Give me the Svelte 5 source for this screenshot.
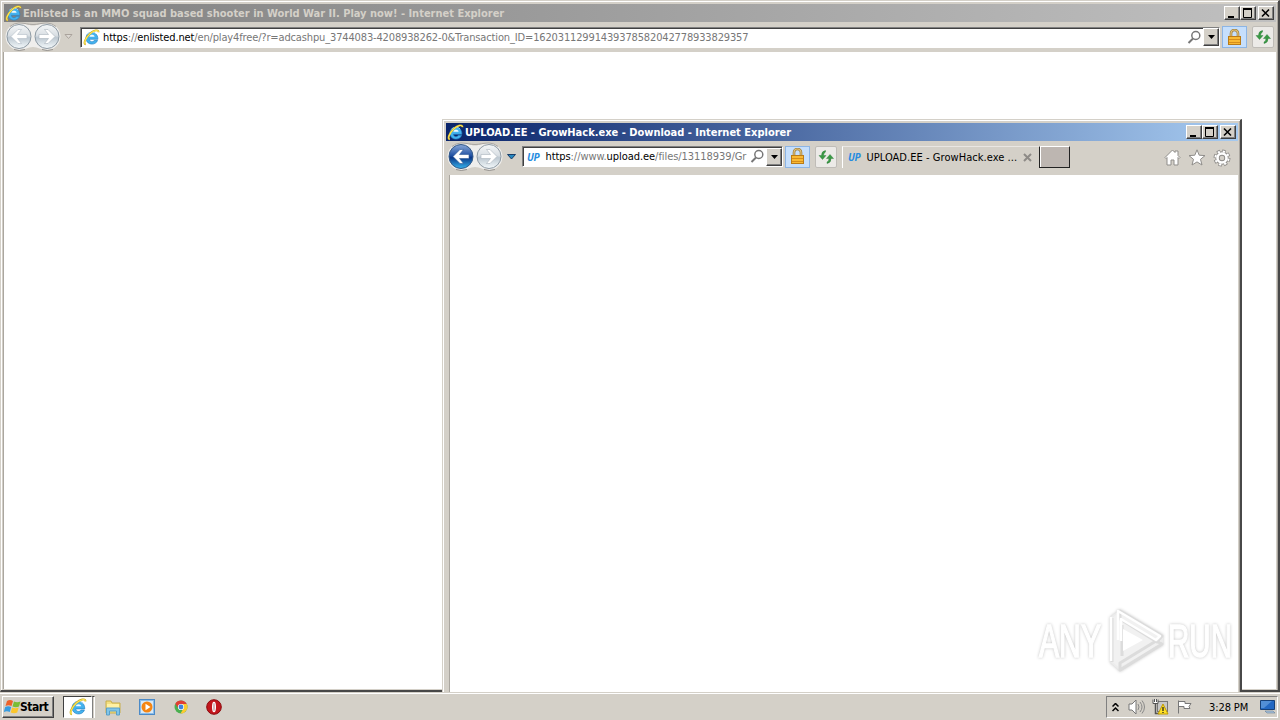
<script>
  const mainUrl = '/en/play4free/?r=adcashpu_3744083-4208938262-0&Transaction_ID=16203112991439378582042778933829357';
</script>

{#snippet ieIcon(size)}
  <svg class="ie" width={size} height={size} viewBox="0 0 16 16">
    <path d="M14 9.700H6c.2 2.600 3.600 2.900 4.700 1h3c-1.500 5.200-10.900 4.700-10.900-2C2.800 1 14.300 1 14 9.700z" fill="#43b2ee" stroke="#2583c5" stroke-width=".6" />
    <path d="M6 7.300h4.900c-.3-2.400-4.500-2.400-4.900 0z" fill="#f1faff" />
    <path d="M4.200 4.800Q6 3 8.400 3q2.600 0 4 1.700" fill="none" stroke="#a8def8" stroke-width=".8" />
    <path d="M2.700 14.500C-.2 14.400 2 8.600 6.300 4.500 9.700 1.300 14.600-.2 14.700 3" fill="none" stroke="#c7a728" stroke-width="1.700" />
    <path d="M2.600 14.200C.2 14 2.300 8.600 6.500 4.600 10 1.400 14.300.2 14.500 2.900" fill="none" stroke="#ffe651" stroke-width="1.100" />
  </svg>
{/snippet}

{#snippet navButtons(active)}
  <svg class="nav" width="57" height="32" viewBox="0 0 57 32">
    <defs>
      <linearGradient id="blueOrb" x2="0" y2="1">
        <stop offset="0" stop-color="#8ba9d8" />
        <stop offset=".45" stop-color="#2454a5" />
        <stop offset=".55" stop-color="#0b3888" />
        <stop offset="1" stop-color="#36b4ef" />
      </linearGradient>
      <linearGradient id="grayOrb" x2="0" y2="1">
        <stop offset="0" stop-color="#f5f7f8" />
        <stop offset=".45" stop-color="#d9dfe4" />
        <stop offset=".55" stop-color="#bdc8d1" />
        <stop offset="1" stop-color="#f5fafc" />
      </linearGradient>
    </defs>
    <path d="M14 2C20 2 23 4.500 28 4.500S36 2 42 2a13.500 13.500 0 010 27C36 29 33 26 28 26s-8 3-14 3a13.500 13.500 0 010-27z" fill="#efeeec" />
    <path d="M5 5.500Q9 2 14 2C20 2 23 3.500 28 3.500S36 2 42 2q5 0 9 3.500" fill="none" stroke="#a9a6a2" />
    <path d="M9 28.500q5 2 11 0M37 28.500q5 2 11 0" fill="none" stroke="#96938f" />
    <circle cx="14" cy="15.500" r="12" fill={active ? 'url(#blueOrb)' : 'url(#grayOrb)'} stroke={active ? '#345987' : '#8d99a3'} />
    <circle cx="42" cy="15.500" r="12" fill="url(#grayOrb)" stroke="#8d99a3" />
    <path d="M6 15.500L13 8.500h3.500L12.500 13.500h9.500v4H12.500l4 5H13z" fill="#fff" stroke={active ? '#315a97' : '#b3bec8'} stroke-width=".6" />
    <path d="M50 15.500L43 8.500h-3.500l4 5H34v4h9.500l-4 5H43z" fill="#fff" stroke="#a9b3bc" stroke-width=".6" />
  </svg>
{/snippet}

{#snippet windowButtons()}
  <div class="win-buttons">
    <span class="wb"><svg width="14" height="12"><path d="M3 9h6v2H3z" /></svg></span>
    <span class="wb"><svg width="14" height="12"><path d="M2.500 2.500h8v8h-8z" fill="none" stroke="#000" /><path d="M2 1h9v2H2z" /></svg></span>
    <span class="wb close"><svg width="14" height="12"><path d="M3 2.500l7 7M10 2.500l-7 7" stroke="#000" stroke-width="1.600" /></svg></span>
  </div>
{/snippet}

{#snippet addressEnd()}
  <svg class="search" width="15" height="15"><circle cx="8.800" cy="5.500" r="4" fill="none" stroke="#777" stroke-width="1.500" /><path d="M6 8.500L1.500 13" stroke="#777" stroke-width="2" /></svg>
  <span class="drop"><svg width="7" height="4"><path d="M0 0h7L3.500 4z" /></svg></span>
{/snippet}

{#snippet pageButtons()}
  <span class="lock">
    <svg width="15" height="17" viewBox="0 0 15 17">
      <path d="M4 8V4.500a3.500 3.500 0 017 0V8" fill="none" stroke="#9c7b3c" stroke-width="2.600" />
      <path d="M4 8V4.500a3.500 3.500 0 017 0V8" fill="none" stroke="#e3c377" stroke-width="1.200" />
      <rect x="1.500" y="7.500" width="12" height="8" fill="#f9b933" stroke="#b97b18" />
      <path d="M2 10.500h11M2 13.500h11" stroke="#d68d1b" />
    </svg>
  </span>
  <span class="refresh">
    <svg width="16" height="16" viewBox="0 0 16 16">
      <path d="M7.500 1.500Q3.500 2 3.500 6.500H1L4.500 10.500 8 6.500H5.500Q5.500 4 7.500 3z" fill="#3a9a45" stroke="#257632" stroke-width=".4" />
      <path d="M9 14.500q4-.5 4-5h2.500L12 5.500l-3.500 4H11q0 2.500-2 3.500z" fill="#3a9a45" stroke="#257632" stroke-width=".4" />
    </svg>
  </span>
{/snippet}

<div class="desktop">
  <section class="window back">
    <header class="title">
      {@render ieIcon(17)}
      <h1>Enlisted is an MMO squad based shooter in World War II. Play now! - Internet Explorer</h1>
      {@render windowButtons()}
    </header>
    <div class="toolbar">
      {@render navButtons(false)}
      <svg class="history" width="9" height="6"><path d="M1 .5h7L4.500 4.500z" fill="#ddd9d4" stroke="#aaa39c" /></svg>
      <div class="address">
        {@render ieIcon(17)}
        <span class="url"><b>https</b>://<b>enlisted.net</b>{mainUrl}</span>
        {@render addressEnd()}
      </div>
      {@render pageButtons()}
    </div>
    <main class="page"></main>
  </section>

  <section class="window front">
    <header class="title">
      {@render ieIcon(17)}
      <h1>UPLOAD.EE - GrowHack.exe - Download - Internet Explorer</h1>
      {@render windowButtons()}
    </header>
    <div class="toolbar">
      {@render navButtons(true)}
      <svg class="history" width="9" height="6"><path d="M.5 .5h8L4.500 5z" fill="#2789c1" stroke="#193d69" /></svg>
      <div class="address">
        <i class="up">UP</i>
        <span class="url"><b>https</b>://www.<b>upload.ee</b>/files/13118939/Gr</span>
        {@render addressEnd()}
      </div>
      {@render pageButtons()}
      <div class="tab">
        <i class="up">UP</i>
        <span>UPLOAD.EE - GrowHack.exe ...</span>
        <svg width="9" height="9"><path d="M1 1l7 7M8 1L1 8" stroke="#8e8b87" stroke-width="2" /></svg>
      </div>
      <span class="new-tab"></span>
      <div class="tools">
        <svg width="17" height="17" viewBox="0 0 17 17"><path d="M1 8.500L8.500 1 11 3.500V2h3v4.500l2 2-1 1-1-1V16h-4v-5H7v5H3V8.500l-1 1z" fill="#fff" stroke="#8f8d8a" /></svg>
        <svg width="18" height="17" viewBox="0 0 18 17"><path d="M9 .8l2.200 5.400 5.800.4-4.500 3.700 1.500 5.700L9 12.900 4 16l1.500-5.700L1 6.600l5.800-.4z" fill="#fff" stroke="#8f8d8a" /></svg>
        <svg width="18" height="18" viewBox="0 0 18 18">
          <circle cx="9" cy="9" r="6.800" fill="none" stroke="#8f8d8a" stroke-width="3.400" stroke-dasharray="3.340 2" />
          <circle cx="9" cy="9" r="4.500" fill="none" stroke="#8f8d8a" stroke-width="4.400" />
          <circle cx="9" cy="9" r="6.600" fill="none" stroke="#fff" stroke-width="2" stroke-dasharray="2.200 2.980" stroke-dashoffset="-.6" />
          <circle cx="9" cy="9" r="4.500" fill="none" stroke="#fff" stroke-width="2.600" />
        </svg>
      </div>
    </div>
    <main class="page"></main>
  </section>

  <svg class="watermark" width="212" height="72" viewBox="0 0 212 72">
    <text x="9" y="52" textLength="62" lengthAdjust="spacingAndGlyphs">ANY</text>
    <text x="138" y="52" textLength="64" lengthAdjust="spacingAndGlyphs">RUN</text>
    <g fill="none" stroke-linejoin="round">
      <path d="M81 13v44l8 7 43-25V31L89 7l-5 3z" fill="#f1f1f1" stroke="#ececec" stroke-width="2" />
      <path d="M82 13v44M90 6l42 25-5 6-37-23zM90 65l42-26-6-3-36 22zM92 20v31" stroke="#dcdcdc" stroke-width="3" />
      <path d="M81 12v44M88 35V6l42 25-4 4-35-21v22" stroke="#fff" stroke-width="2.500" />
      <path d="M93 24v22l20-11z" fill="#fff" />
    </g>
  </svg>

  <footer class="taskbar">
    <button class="start">
      <svg width="17" height="16" viewBox="0 0 17 16">
        <path d="M3 2q3-2 6 0L7.500 7q-3-1.500-6 0z" fill="#ee6229" />
        <path d="M10 2.500q3 1.500 6.500 0L15 7.500q-3 1.500-6.500 0z" fill="#79bd35" />
        <path d="M1.200 8q3-1.500 6 0L5.800 13q-3-1.500-6 0z" fill="#389ce0" />
        <path d="M8.200 8.500q3 1.500 6.500 0l-1.500 5q-3 1.500-6.500 0z" fill="#fbc62c" />
      </svg>
      <span>Start</span>
    </button>
    <div class="tasks">
      <span class="task active">{@render ieIcon(18)}</span><span class="stack"></span>
      <svg class="folder" width="16" height="17" viewBox="0 0 16 17">
        <path d="M1 2h5l1 2h8v10H1z" fill="#f3df81" stroke="#c8ae4b" />
        <path d="M2 5h12v5H2z" fill="#fff1a4" />
        <path d="M1.500 16V9h13v7h-3v-4h-7v4z" fill="#7fc5e9" stroke="#5a9fc7" />
      </svg>
      <svg class="media" width="17" height="17" viewBox="0 0 17 17">
        <rect x=".5" y=".5" width="15" height="15" fill="#8abdea" stroke="#4b8ac7" />
        <rect x="2" y="2" width="12" height="12" fill="#d9e9f6" />
        <circle cx="8" cy="8" r="5.500" fill="#f58512" /><path d="M6.500 4.800v6.400L11.500 8z" fill="#fff" />
      </svg>
      <svg class="chrome" width="14" height="14" viewBox="0 0 14 14">
        <circle cx="7" cy="7" r="6.500" fill="#4aaf50" />
        <path d="M1.300 3.800A6.500 6.500 0 0112.700 4H7L4.500 8.500z" fill="#e13e34" />
        <path d="M7 4h5.700A6.500 6.500 0 016.500 13.500L9.500 8.500z" fill="#fccb2f" />
        <circle cx="7" cy="7" r="3.100" fill="#fff" /><circle cx="7" cy="7" r="2.400" fill="#3f83dd" />
      </svg>
      <svg class="opera" width="16" height="16" viewBox="0 0 16 16">
        <circle cx="8" cy="8" r="7.300" fill="#c3161c" stroke="#8b090d" />
        <ellipse cx="8" cy="8" rx="2" ry="5.300" fill="#fff" /><ellipse cx="8" cy="8" rx=".6" ry="4.300" fill="#b9868a" />
      </svg>
    </div>
    <div class="tray">
      <svg width="7" height="9"><path d="M.5 3.500l3-3 3 3M.5 8l3-3 3 3" fill="none" stroke="#000" stroke-width="1.500" /></svg>
      <svg width="17" height="16" viewBox="0 0 17 16"><path d="M1 5h3l4-4v14l-4-4H1z" fill="#fff" stroke="#777" /><path d="M10 5q2 3 0 6M12 3q4 5 0 10M14 1.500q5 6.500 0 13" fill="none" stroke="#888" /></svg>
      <svg width="17" height="16" viewBox="0 0 17 16">
        <rect x="5.500" y="2.500" width="10" height="10" fill="#c8c8c8" stroke="#777" />
        <path d="M3.500 5v9.500h4" fill="none" stroke="#555" stroke-width="1.500" /><path d="M1 .5v4h5v-4M2.500 0v3M4.500 0v3" fill="#fff" stroke="#555" />
        <path d="M11 5l5 10H6z" fill="#ffe126" stroke="#c09b00" /><path d="M11 8v4M11 13v1" stroke="#222" stroke-width="1.300" />
      </svg>
      <svg width="17" height="16" viewBox="0 0 17 16"><path d="M2.500 1.500v13M3 2.500h6v2h6l-2 3 1 2H8v-2H3" fill="#fff" stroke="#777" /></svg>
      <time>3:28 PM</time>
      <svg class="monitor" width="16" height="14" viewBox="0 0 16 14"><path d="M.5.500h14v9H.5z" fill="#2368c2" stroke="#174178" /><path d="M1 1h11L4 8H1z" fill="#528fd6" /><path d="M5 11h8l2 2H7z" fill="#aac2dc" stroke="#51708f" stroke-width=".5" /></svg>
    </div>
  </footer>
</div>

<style>
  :global(body) {
    overflow: hidden;
  }

  .desktop {
    position: relative;
    width: 1280px;
    height: 720px;
    background: #d4d0c8;
    font: 11px "DejaVu Sans Condensed", Tahoma, sans-serif;
    color: #000;
    overflow: hidden;
  }

  .desktop * {
    box-sizing: border-box;
  }

  svg {
    display: block;
    flex: none;
  }

  .window {
    position: absolute;
    display: flex;
    flex-direction: column;
    background: #d4d0c8;
    border: 1px solid #d4d0c8;
    border-right: 2px solid #484848;
    box-shadow: inset 1px 1px #fff, inset -1px 0 #aaa69f;
  }

  .back {
    left: 0;
    top: 0;
    width: 1280px;
    height: 692px;
    padding: 3px 2px 1px;
    border-bottom: 2px solid #484848;
  }

  .front {
    left: 442px;
    top: 119px;
    width: 800px;
    height: 590px;
    padding: 3px 2px 0 3px;
  }

  .title {
    display: flex;
    align-items: center;
    height: 18px;
    flex: none;
    padding: 0 2px 0 1px;
    background: linear-gradient(90deg, #808080, #c0c0c0);
    color: #d4d0c8;
  }

  .back .title {
    margin-left: 1px;
  }

  .front .title {
    background: linear-gradient(90deg, #0a246a, #a6caf0);
    color: #fff;
  }

  h1 {
    margin: 0 0 0 1px;
    font-size: 11px;
    line-height: 17px;
    white-space: nowrap;
    letter-spacing: -0.005px;
  }

  .win-buttons {
    display: flex;
    margin-left: auto;
  }

  .wb {
    width: 16px;
    height: 14px;
    background: #d4d0c8;
    border: 1px solid;
    border-color: #fff #404040 #404040 #fff;
    box-shadow: inset -1px -1px #808080;
  }

  .close {
    margin-left: 2px;
  }

  .toolbar {
    display: flex;
    align-items: center;
    height: 30px;
    flex: none;
    padding-left: 2px;
  }

  .front .toolbar {
    height: 34px;
    padding: 0 0 3px 1px;
  }

  .nav {
    margin-right: 2px;
  }

  .history {
    margin-right: 7px;
  }

  .front .history {
    margin: 0 6px 0 1px;
  }

  .address {
    display: flex;
    align-items: center;
    width: 1140px;
    height: 21px;
    background: #fff;
    border: 1px solid #808080;
    border-right-color: #fff;
    border-bottom-color: #fff;
    box-shadow: inset 1px 1px #404040;
    padding-left: 2px;
  }

  .front .address {
    width: 261px;
  }

  .url {
    flex: 1;
    min-width: 0;
    margin-left: 3px;
    padding-top: 1px;
    overflow: hidden;
    white-space: nowrap;
    color: #777;
    letter-spacing: -0.145px;
  }

  .front .url {
    margin-left: 4px;
    padding-top: 0;
    letter-spacing: -0.06px;
  }

  .url b {
    color: #000;
    font-weight: normal;
  }

  .search {
    margin: 0 1px 0 2px;
  }

  .drop {
    display: grid;
    place-items: center;
    width: 16px;
    height: 18px;
    background: #d4d0c8;
    border: 1px solid;
    border-color: #fff #404040 #404040 #fff;
    box-shadow: inset -1px -1px #808080;
  }

  .lock,
  .refresh {
    display: grid;
    place-items: center;
    height: 22px;
    flex: none;
  }

  .lock {
    width: 25px;
    margin-left: 2px;
    background: #c6dffc;
    border: 1px solid #8db5e4;
  }

  .refresh {
    width: 22px;
    margin-left: 5px;
    background: #eceae7;
    border: 1px solid #bfbcb7;
    border-radius: 2px;
  }

  .page {
    flex: 1;
    background: #fff;
    border-left: 1px solid #aaa69f;
  }

  .front .page {
    margin-left: 3px;
  }

  .up {
    font: italic bold 10px "Open Sans", sans-serif;
    color: #268ce0;
    margin: 0 2px;
    letter-spacing: -0.3px;
  }

  .tab {
    display: flex;
    align-items: center;
    width: 197px;
    height: 22px;
    margin-left: 5px;
    padding-left: 3px;
    border-left: 1px solid #fff;
    border-top: 1px solid #e9e6e2;
  }

  .tab span {
    width: 157px;
    margin-left: 4px;
    white-space: nowrap;
    letter-spacing: 0.05px;
  }

  .new-tab {
    width: 31px;
    height: 22px;
    background: #bdb6b1;
    border: 1px solid #222;
    border-top-color: #fff;
    box-shadow: inset 1px 0 #fff;
  }

  .tools {
    display: flex;
    gap: 7px;
    margin: 3px 7px 0 auto;
  }

  .watermark {
    position: absolute;
    left: 1030px;
    top: 605px;
    pointer-events: none;
    filter: drop-shadow(0 0 1.5px #c4c4c4);
  }

  .watermark text {
    font: 47px "Liberation Sans", sans-serif;
    fill: #fff;
    stroke: #fff;
    stroke-width: 1.5px;
  }

  .taskbar {
    position: absolute;
    left: 0;
    bottom: 0;
    width: 1280px;
    height: 28px;
    display: flex;
    align-items: center;
    padding: 1px 2px 0;
    background: #d4d0c8;
    border-top: 1px solid #d4d0c8;
    box-shadow: inset 0 1px #fff;
  }

  .start {
    display: flex;
    align-items: center;
    width: 52px;
    height: 22px;
    padding: 0 1px;
    background: #d4d0c8;
    border: 1px solid;
    border-color: #fff #404040 #404040 #fff;
    box-shadow: inset -1px -1px #808080;
    font: bold 12px "DejaVu Sans Condensed", Tahoma, sans-serif;
    color: #000;
  }

  .start span {
    margin-left: -1px;
    letter-spacing: -0.5px;
  }

  .tasks {
    display: flex;
    align-items: center;
    margin-left: 9px;
  }

  .task {
    display: grid;
    place-items: center;
    width: 29px;
    height: 22px;
    background: #fff;
    border: 1px solid;
    border-color: #404040 #fff #fff #404040;
  }

  .stack {
    width: 3px;
    height: 22px;
    border-top: 1px solid #404040;
    border-right: 1px solid #fff;
    border-left: 1px solid #808080;
  }

  .folder {
    margin-left: 10px;
  }

  .media {
    margin-left: 18px;
  }

  .chrome {
    margin-left: 18px;
  }

  .opera {
    margin-left: 18px;
  }

  .tray {
    display: flex;
    align-items: center;
    width: 172px;
    height: 22px;
    margin-left: auto;
    padding-left: 5px;
    gap: 7px;
    border: 1px solid;
    border-color: #808080 #fff #fff #808080;
  }

  .tray svg:first-child {
    margin-right: 2px;
  }

  time {
    width: 44px;
    margin-left: 9px;
    white-space: nowrap;
    letter-spacing: -0.1px;
  }
</style>
